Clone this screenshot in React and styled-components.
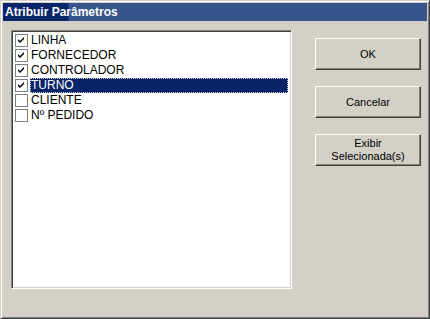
import React from "react";
import styled, { createGlobalStyle } from "styled-components";

const Global = createGlobalStyle`
  html, body { margin: 0; padding: 0; background: #d4d0c8; }
  body { font-family: "Liberation Sans", Arial, sans-serif; font-size: 11px; }
`;

const Window = styled.div`
  box-sizing: border-box;
  width: 430px;
  height: 319px;
  background: #d4d0c8;
  border-style: solid;
  border-width: 1px;
  border-color: #d4d0c8 #404040 #404040 #d4d0c8;
  box-shadow: inset 1px 1px 0 #ffffff, inset -1px -1px 0 #808080;
  padding: 2px;
  display: flex;
  flex-direction: column;
`;

const TitleBar = styled.div`
  height: 18px;
  flex: none;
  background: linear-gradient(to right, #0a246a 0px, #0a246a 65px, #36548c 66px, #36548c 100%);
  color: #fff;
  font-weight: bold;
  font-size: 12px;
  line-height: 18px;
  padding-left: 2px;
  white-space: nowrap;
`;

const Body = styled.div`
  display: flex;
  padding: 9px 0 0 8px;
  gap: 23px;
`;

const ListBox = styled.div`
  box-sizing: border-box;
  width: 281px;
  height: 259px;
  background: #fff;
  border-style: solid;
  border-width: 1px;
  border-color: #808080 #ffffff #ffffff #808080;
  box-shadow: inset 1px 1px 0 #404040, inset -1px -1px 0 #d4d0c8;
  padding: 2px 3px 2px 2px;
  display: flex;
  flex-direction: column;
`;

const Row = styled.div`
  display: flex;
  align-items: center;
  height: 15px;
`;

const Check = styled.div`
  box-sizing: border-box;
  width: 13px;
  height: 13px;
  margin: 0 2px 0 1px;
  border: 1px solid #808080;
  background: #fff;
  flex: none;
  display: flex;
  align-items: center;
  justify-content: center;
`;

const Label = styled.div`
  flex: 1;
  height: 15px;
  line-height: 15px;
  padding-left: 1px;
  box-sizing: border-box;
  font-size: 12px;
  color: ${(p) => (p.$sel ? "#fff" : "#000")};
  background: ${(p) => (p.$sel ? "#0a246a" : "transparent")};
  outline: ${(p) => (p.$sel ? "1px dotted #d4d0c8" : "none")};
  outline-offset: -1px;
  white-space: nowrap;
`;

const Buttons = styled.div`
  display: flex;
  flex-direction: column;
  gap: 16px;
  padding-top: 8px;
`;

const Button = styled.div`
  box-sizing: border-box;
  width: 106px;
  height: 32px;
  background: #d4d0c8;
  border-style: solid;
  border-width: 1px;
  border-color: #ffffff #404040 #404040 #ffffff;
  box-shadow: inset -1px -1px 0 #808080;
  display: flex;
  align-items: center;
  justify-content: center;
  text-align: center;
  color: #000;
  font-size: 11px;
  line-height: 13px;
`;

const Tick = () => (
  <svg width="9" height="9" viewBox="0 0 9 9">
    <path d="M1 3 L3 5 L7 1 L7 3 L3 7 L1 5 Z" fill="#000" />
    <path d="M1 4 L3 6 L7 2" stroke="#000" strokeWidth="1" fill="none" />
  </svg>
);

const items = [
  { t: "LINHA", c: true },
  { t: "FORNECEDOR", c: true },
  { t: "CONTROLADOR", c: true },
  { t: "TURNO", c: true, s: true },
  { t: "CLIENTE", c: false },
  { t: "Nº PEDIDO", c: false },
];

export default function App() {
  return (
    <>
      <Global />
      <Window>
        <TitleBar>Atribuir Parâmetros</TitleBar>
        <Body>
          <ListBox>
            {items.map((it) => (
              <Row key={it.t}>
                <Check>{it.c && <Tick />}</Check>
                <Label $sel={it.s}>{it.t}</Label>
              </Row>
            ))}
          </ListBox>
          <Buttons>
            <Button>OK</Button>
            <Button>Cancelar</Button>
            <Button>
              Exibir
              <br />
              Selecionada(s)
            </Button>
          </Buttons>
        </Body>
      </Window>
    </>
  );
}
